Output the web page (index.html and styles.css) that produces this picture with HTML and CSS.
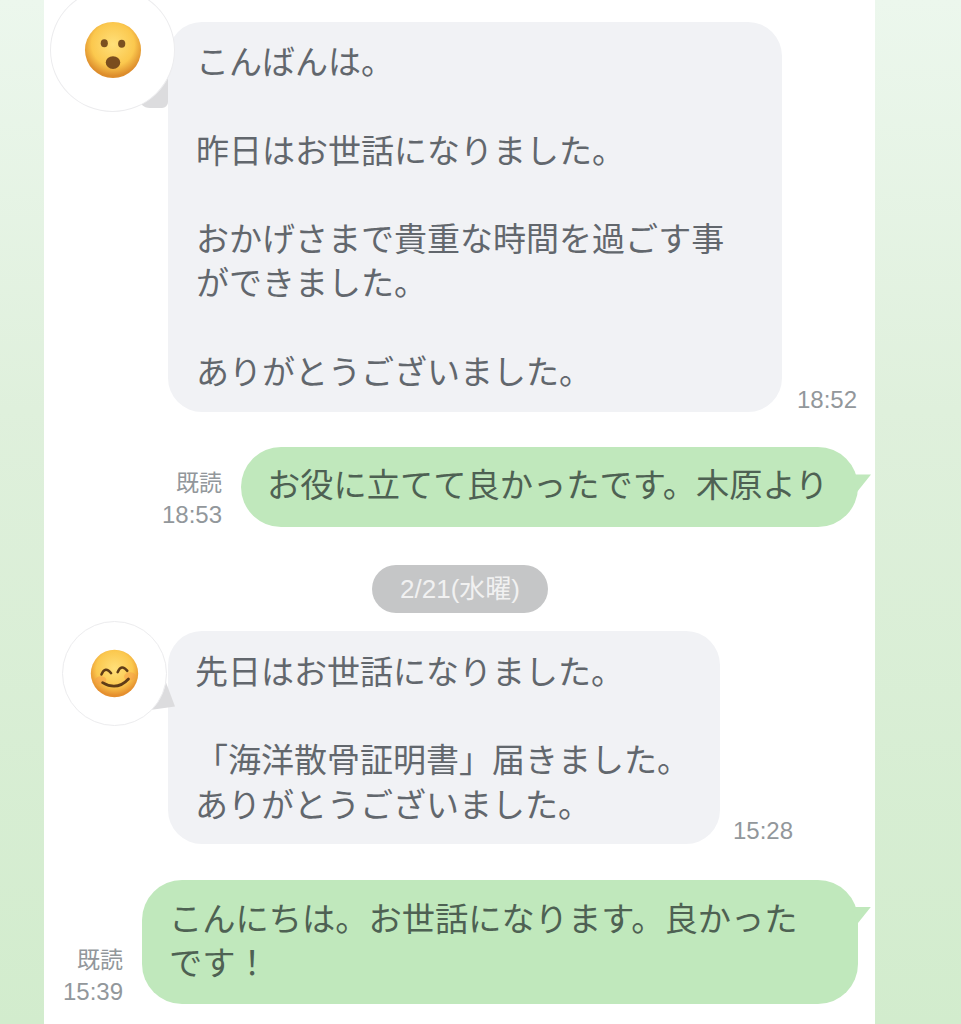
FILE: index.html
```html
<!DOCTYPE html>
<html lang="ja">
<head>
<meta charset="utf-8">
<title>トーク</title>
<link rel="stylesheet" href="styles.css">
</head>
<body>
<div id="talk">

<div class="row left first">
 <div class="avatar big">
  <svg class="emoji" viewBox="0 0 60 60">
   <defs>
    <radialGradient id="face1" cx="50%" cy="40%" r="56%">
     <stop offset="0" stop-color="#ffe07a"/>
     <stop offset="0.68" stop-color="#fbc84e"/>
     <stop offset="1" stop-color="#dd8d2c"/>
    </radialGradient>
   </defs>
   <circle cx="30" cy="30" r="29" fill="url(#face1)"/>
   <ellipse cx="21" cy="23" rx="3.7" ry="4.2" fill="#7a5020"/>
   <ellipse cx="39" cy="23.5" rx="3.7" ry="4.2" fill="#7a5020"/>
   <ellipse cx="30" cy="43" rx="7.5" ry="6.6" fill="#7a4d1e"/>
  </svg>
 </div>
 <div class="bubble gray b1">こんばんは。<br><br>昨日はお世話になりました。<br><br>おかげさまで貴重な時間を過ごす事<br>ができました。<br><br>ありがとうございました。</div>
 <div class="meta">18:52</div>
</div>

<div class="row right r2">
 <div class="meta"><span class="read">既読</span><br>18:53</div>
 <div class="bubble green">お役に立てて良かったです。木原より</div>
</div>

<div class="date"><span>2/21(水曜)</span></div>

<div class="row left r3">
 <div class="avatar small">
  <svg class="emoji" viewBox="0 0 60 60">
   <defs>
    <radialGradient id="face2" cx="50%" cy="40%" r="56%">
     <stop offset="0" stop-color="#ffe07a"/>
     <stop offset="0.68" stop-color="#fbc84e"/>
     <stop offset="1" stop-color="#e58f2e"/>
    </radialGradient>
   </defs>
   <circle cx="30" cy="30" r="29" fill="url(#face2)"/>
   <g transform="rotate(-8 30 30)">
    <ellipse cx="12" cy="36" rx="7" ry="5" fill="#f59a4a" opacity="0.5"/>
    <ellipse cx="48" cy="36" rx="7" ry="5" fill="#f59a4a" opacity="0.5"/>
    <path d="M14 29 Q20 19 26 29" fill="none" stroke="#5f3c17" stroke-width="3" stroke-linecap="round"/>
    <path d="M34 29 Q40 19 46 29" fill="none" stroke="#5f3c17" stroke-width="3" stroke-linecap="round"/>
    <path d="M14 39 Q30 52 46 39" fill="none" stroke="#5f3c17" stroke-width="3.4" stroke-linecap="round"/>
   </g>
  </svg>
 </div>
 <div class="bubble gray b3">先日はお世話になりました。<br><br>「海洋散骨証明書」届きました。<br>ありがとうございました。</div>
 <div class="meta m3">15:28</div>
</div>

<div class="row right r4">
 <div class="meta"><span class="read">既読</span><br>15:39</div>
 <div class="bubble green b4">こんにちは。お世話になります。良かった<br>です！</div>
</div>

</div>
</body>
</html>
```

FILE: styles.css
```css
html, body{
	margin: 0;
	height: 1024px;
	overflow: hidden;
}

body{
	background: linear-gradient(#ecf7ed, #dff0dc 40%, #d2eccd);
	font-family: "Liberation Sans", "Noto Sans CJK JP", sans-serif;
}

#talk{
	position: relative;
	width: 831px;
	height: 1024px;
	margin-left: 44px;
	background: #fff;
	overflow: hidden;
}

/* rows */
.row{
	display: flex;
	align-items: flex-end;
}
.row.left{
	padding-left: 124px;
}
.row.right{
	justify-content: flex-end;
	padding-right: 17px;
}
.first{ padding-top: 22px; }
.r2{ margin-top: 35px; }
.r3{ margin-top: 18px; }
.r4{ margin-top: 36px; }

/* bubbles */
.bubble{
	position: relative;
	box-sizing: border-box;
	font-size: 33px;
	line-height: 44.3px;
	border-radius: 34px;
	color: #62676d;
}
.gray{
	background: #f1f2f5;
}
.b1{
	width: 614px;
	padding: 19px 28px 17px 28px;
}
.b3{
	width: 552px;
	padding: 20px 20px 16px 27px;
}
.green{
	width: 617px;
	padding: 17px 10px 18px 26px;
	background: #c0e8bc;
	font-size: 33.25px;
	color: #4e6153;
	border-radius: 40px;
}
.green:after{
	content: "";
	position: absolute;
	right: -13px;
	top: 27px;
	width: 18px;
	height: 18px;
	background: #c0e8bc;
	clip-path: polygon(0 0, 100% 0, 20% 100%);
}
.b4{
	width: 716px;
	padding: 18px 20px 18px 27px;
}

/* time */
.meta{
	font-size: 24px;
	line-height: 31px;
	color: #92979b;
	white-space: nowrap;
}
.read{
	font-size: 23px;
}
.left .meta{
	margin-left: 15px;
	margin-bottom: -3px;
}
.left .m3{
	margin-left: 13px;
	margin-bottom: -2px;
}
.right .meta{
	margin-right: 19px;
	margin-bottom: -3px;
	text-align: right;
}

/* date */
.date{
	margin-top: 38px;
	padding-left: 328px;
}
.date span{
	display: block;
	box-sizing: border-box;
	width: 176px;
	height: 48px;
	line-height: 48px;
	text-align: center;
	font-size: 26px;
	color: #f1f1f1;
	background: #c5c6c7;
	border-radius: 24px;
}

/* avatar */
.avatar{
	position: absolute;
	z-index: 1;
	display: flex;
	align-items: center;
	justify-content: center;
}
.avatar:before{
	content: "";
	position: absolute;
	background: #dcdcde;
}
.avatar:after{
	content: "";
	position: absolute;
	z-index: 1;
	top: 0;
	left: 0;
	right: 0;
	bottom: 0;
	box-sizing: border-box;
	background: #fff;
	border: 1px solid #ececee;
	border-radius: 50%;
}
.emoji{
	position: relative;
	z-index: 2;
}
.big{
	left: 6px;
	top: -12px;
	width: 125px;
	height: 124px;
}
.big .emoji{
	width: 58px;
	height: 58px;
}
.big:before{
	right: 7px;
	bottom: 4px;
	width: 30px;
	height: 34px;
	border-radius: 0 0 6px 12px;
}
.small{
	left: 18px;
	top: 621px;
	width: 105px;
	height: 105px;
}
.small .emoji{
	width: 49px;
	height: 49px;
}
.small:before{
	right: -8px;
	bottom: 16px;
	width: 30px;
	height: 30px;
	clip-path: polygon(67% 0, 100% 88%, 17% 100%);
}
```
